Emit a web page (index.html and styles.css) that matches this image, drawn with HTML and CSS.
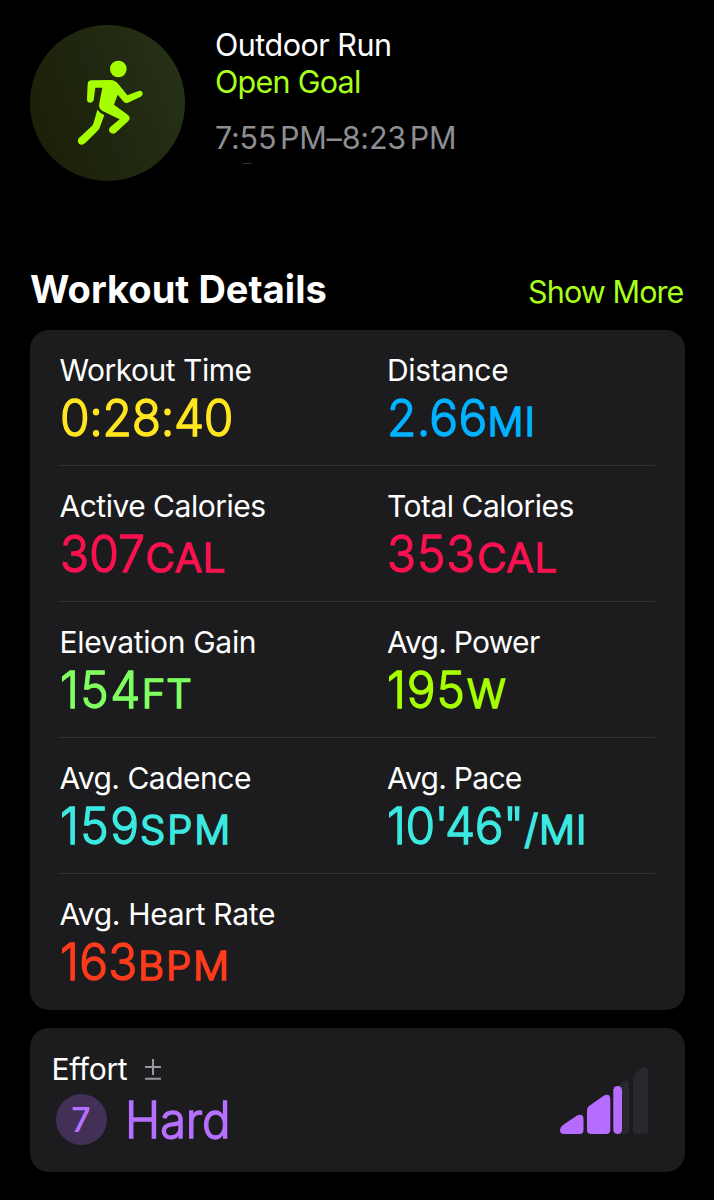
FILE: index.html
```html
<!DOCTYPE html>
<html lang="en">
<head>
<meta charset="utf-8">
<title>Workout Details</title>
<link rel="stylesheet" href="styles.css">
</head>
<body>
<header class="summary">
  <div class="activity">
    <svg class="runner" viewBox="0 0 270 300" width="90" height="100" aria-hidden="true">
      <circle cx="160" cy="57" r="25"/>
      <path d="M79 91L137 90Q151 91 160 102L187 136L221 123Q230 121 233 129Q234 136 227 140L189 158Q182 161 176 155L158 134L147 164L188 194Q199 203 190 213L152 248Q143 255 134 246Q129 238 136 231L164 208L114 184Q99 175 103 160L112 113L91 113L86 150Q83 159 74 158Q65 156 66 147L68 102Q69 91 79 91Z"/>
      <path d="M97 179Q105 189 118 195L105 231Q103 237 98 242L60 280Q51 288 42 281Q35 272 42 264L80 229Q84 224 86 218Z"/>
    </svg>
  </div>
  <div class="summary-text">
    <div class="name">Outdoor Run</div>
    <div class="goal">Open Goal</div>
    <div class="time">7:55 PM–8:23 PM</div>
    <div class="trace"></div>
  </div>
</header>
<main>
  <div class="heading">
    <h1>Workout Details</h1>
    <a class="more">Show More</a>
  </div>
  <section class="card metrics">
    <div class="row">
      <div class="metric"><div class="label">Workout Time</div><div class="value yellow clock">0:28:40</div></div>
      <div class="metric"><div class="label wide">Distance</div><div class="value blue tight">2.66<span class="unit">MI</span></div></div>
    </div>
    <div class="row">
      <div class="metric"><div class="label">Active Calories</div><div class="value pink tight">307<span class="unit">CAL</span></div></div>
      <div class="metric"><div class="label">Total Calories</div><div class="value pink medium">353<span class="unit">CAL</span></div></div>
    </div>
    <div class="row">
      <div class="metric"><div class="label wide">Elevation Gain</div><div class="value green loose">154<span class="unit">FT</span></div></div>
      <div class="metric"><div class="label narrow">Avg. Power</div><div class="value lime medium">195<span class="unit">W</span></div></div>
    </div>
    <div class="row">
      <div class="metric"><div class="label">Avg. Cadence</div><div class="value cyan loose">159<span class="unit spread">SPM</span></div></div>
      <div class="metric"><div class="label narrow">Avg. Pace</div><div class="value cyan pace">10'46"<span class="unit">/MI</span></div></div>
    </div>
    <div class="row">
      <div class="metric"><div class="label wide">Avg. Heart Rate</div><div class="value red tight">163<span class="unit spread">BPM</span></div></div>
    </div>
  </section>
  <section class="card effort">
    <div class="effort-info">
      <div class="effort-title"><span class="label wide">Effort</span>
        <svg width="16" height="22" viewBox="0 0 16 22" aria-hidden="true"><path d="M.7 8H15.3M8 .7V15.3M.7 19.8H15.3"/></svg>
      </div>
      <div class="effort-level"><span class="score">7</span><span class="hard">Hard</span></div>
    </div>
    <svg class="bars" width="90" height="70" viewBox="0 0 90 70" aria-hidden="true">
      <g class="off">
        <path d="M54 24L63 17Q69 13 69 20V65Q69 69 65 69H58Q54 69 54 65Z"/>
        <path d="M73 13Q73 10 76 8L82 3Q88 0 88.300 6V65Q88.300 69 84 69H77Q73 69 73 65Z"/>
      </g>
      <g class="on">
        <path d="M3 60L17 50.500Q23.500 48 23.500 54V65Q23.500 69 19.500 69H4Q0 69 0 65Q0 62 3 60Z"/>
        <path d="M27 45Q27 42.500 29 41L44 30.500Q50 28 50.300 34V65Q50.300 69 46 69H31Q27 69 27 65Z"/>
        <rect x="53.300" y="21" width="8.700" height="48" rx="4.300"/>
      </g>
    </svg>
  </section>
</main>
</body>
</html>
```
FILE: styles.css
```css
* { box-sizing: border-box; }
body {
  margin: 0;
  min-height: 1200px;
  padding: 25px 29.5px 28px;
  background: #000;
  color: #fff;
  font: 400 30px/36px Inter, "Liberation Sans", sans-serif;
  white-space: nowrap;
}
.summary { display: flex; height: 156px; gap: 30px; }
.activity {
  width: 155.5px;
  height: 155.5px;
  border-radius: 50%;
  padding: 25px 0 0 35.5px;
  background: linear-gradient(70deg, #1a1e06, #202710 50%, #273417);
}
.runner { display: block; fill: #a6ff00; }
.summary-text { padding-top: 1px; font-size: 30.5px; line-height: 37px; }
.name { letter-spacing: -.5px; }
.goal { color: #a8ff1a; letter-spacing: -.73px; }
.time { margin-top: 19px; color: #8d8d92; letter-spacing: -.2px; word-spacing: -4.7px; }
.trace { width: 9px; height: 1px; margin: 7px 0 0 28px; background: #303032; }
.heading { display: flex; justify-content: space-between; align-items: baseline; margin-top: 85px; height: 64px; padding: 0 1px 0 .5px; }
h1 { margin: 0; font-size: 38px; line-height: 46px; font-weight: 700; letter-spacing: .05px; }
.more { font-size: 30.5px; color: #a8ff1a; letter-spacing: -.9px; }
.card { width: 655px; border-radius: 19px; background: #1c1c1e; }
.metrics { height: 680px; padding: 0 29.5px 0 28.5px; }
.row { display: grid; grid-template-columns: 327.5px 1fr; height: 136px; padding: 22px 0 0 1.5px; border-bottom: 1px solid #303033; }
.row:last-child { border-bottom: 0; }
.label { letter-spacing: -.5px; }
.label.wide { letter-spacing: -.32px; }
.label.narrow { letter-spacing: -.72px; }
.value {
  margin: 1.5px 0 0 0;
  font-size: 51px;
  line-height: 56px;
  font-weight: 300;
  -webkit-text-stroke: 1.4px currentColor;
  transform: scaleX(.94);
  transform-origin: left;
}
.tight { letter-spacing: .3px; }
.medium { letter-spacing: 1px; }
.loose { letter-spacing: 1.6px; }
.clock { letter-spacing: -.3px; }
.pace { letter-spacing: -.5px; }
/* Units keep their natural width inside the condensed value. */
.unit { display: inline-block; margin-left: .5px; font-size: 40px; letter-spacing: .9px; -webkit-text-stroke-width: 1.7px; transform: scaleX(1.064); transform-origin: left; }
.unit.spread { letter-spacing: 2px; }
.loose .unit { margin-left: -.5px; }
.yellow { color: #ffe620; }
.blue { color: #00b2ff; }
.pink { color: #fa1150; }
.green { color: #80ff60; }
.lime { color: #a6ff00; }
.cyan { color: #3ce9e1; }
.red { color: #ff3b1c; }
.effort { display: flex; justify-content: space-between; height: 144px; margin-top: 18px; padding: 23px 34.5px 0 22px; }
.effort-title { display: flex; gap: 18px; }
.effort-title svg { margin-top: 8px; fill: none; stroke: #98989d; stroke-width: 2; stroke-linecap: round; }
.effort-level { display: flex; margin: 7px 0 0 4px; color: #b670ff; }
.score { width: 51px; height: 51px; border-radius: 50%; background: #433056; font-size: 34px; line-height: 51px; font-weight: 500; text-align: center; }
.hard { margin: -2px 0 0 18px; font-size: 50px; line-height: 56px; font-weight: 300; letter-spacing: -.2px; -webkit-text-stroke: 1.3px currentColor; transform: scaleX(.95); transform-origin: left; }
.bars { margin-top: 14px; }
.on { fill: #b66dff; }
.off { fill: #29282c; }
```
